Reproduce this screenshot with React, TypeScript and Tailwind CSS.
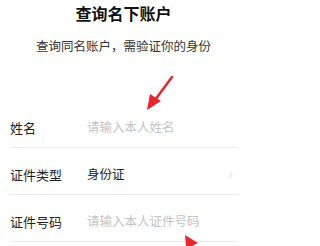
import { ChevronRight } from 'lucide-react';

const font = { fontFamily: '"Noto Sans CJK SC", "Noto Sans", sans-serif' };

function Row({ label, children, right }: { label: string; children: React.ReactNode; right?: React.ReactNode }) {
  return (
    <div className="flex items-center h-[47px] pt-[7px] border-b border-[#ececec] mr-[9px]">
      <div className="w-[77px] text-[13px] text-[#222]">{label}</div>
      <div className="flex-1 text-[12.5px]">{children}</div>
      {right}
    </div>
  );
}

export default function App() {
  return (
    <div className="relative w-[247px] h-[246px] bg-white overflow-hidden" style={font}>
      <div className="pt-[2px] text-center text-[16px] font-semibold leading-[22px] text-[#111]">查询名下账户</div>
      <div className="mt-[13px] text-center text-[12.5px] leading-[17px] text-[#333]">查询同名账户，需验证你的身份</div>

      <div className="mt-[47px] pl-[10px]">
        <Row label="姓名">
          <span className="text-[#c4c4c4]">请输入本人姓名</span>
        </Row>
        <Row label="证件类型" right={<ChevronRight size={10} strokeWidth={1.5} className="text-[#bbb] mr-[2px]" />}>
          <span className="text-[#222]">身份证</span>
        </Row>
        <Row label="证件号码">
          <span className="text-[#c4c4c4]">请输入本人证件号码</span>
        </Row>
      </div>

      {/* red annotation arrows */}
      <svg className="absolute left-0 top-0" width="247" height="246" viewBox="0 0 247 246">
        <line x1="172" y1="77" x2="155" y2="100" stroke="#e8262b" strokeWidth="2.5" strokeLinecap="round" />
        <polygon points="147,110 150,94 161,101" fill="#e8262b" />
        <polygon points="185,235 198,243 192,246 186,246" fill="#e8262b" />
      </svg>
    </div>
  );
}
